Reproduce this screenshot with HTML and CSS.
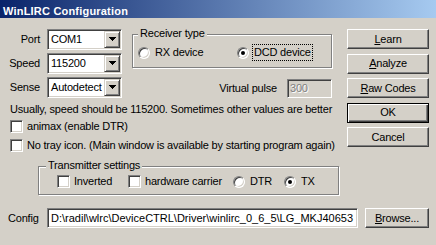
FILE: index.html
```html
<!DOCTYPE html>
<html>
<head>
<meta charset="utf-8">
<title>WinLIRC Configuration</title>
<link rel="stylesheet" href="styles.css">
</head>
<body>
<div class="titlebar"><span class="title">WinLIRC Configuration</span></div>
<div class="main">
  <div class="leftcol">
    <div class="toprow">
      <div class="fields">
        <span class="lbl">Port</span>
        <div class="combo"><span class="val">COM1</span><span class="drop"><svg width="7" height="4" viewBox="0 0 7 4" shape-rendering="crispEdges"><path d="M0 0h7v1H0zM1 1h5v1H1zM2 2h3v1H2zM3 3h1v1H3z" fill="#000"/></svg></span></div>
        <span class="lbl">Speed</span>
        <div class="combo"><span class="val">115200</span><span class="drop"><svg width="7" height="4" viewBox="0 0 7 4" shape-rendering="crispEdges"><path d="M0 0h7v1H0zM1 1h5v1H1zM2 2h3v1H2zM3 3h1v1H3z" fill="#000"/></svg></span></div>
        <span class="lbl">Sense</span>
        <div class="combo"><span class="val">Autodetect</span><span class="drop"><svg width="7" height="4" viewBox="0 0 7 4" shape-rendering="crispEdges"><path d="M0 0h7v1H0zM1 1h5v1H1zM2 2h3v1H2zM3 3h1v1H3z" fill="#000"/></svg></span></div>
      </div>
      <div class="midcol">
        <fieldset class="group rx">
          <legend>Receiver type</legend>
          <div class="rxopts">
            <div class="opt"><span class="radio"></span><span class="txt">RX device</span></div>
            <div class="opt"><span class="radio on"></span><span class="txt focus">DCD device</span></div>
          </div>
        </fieldset>
        <div class="vpulse"><span class="vlbl">Virtual pulse</span><div class="edit disabled">300</div></div>
      </div>
    </div>
    <p class="note">Usually, speed should be 115200. Sometimes other values are better</p>
    <div class="check c1"><span class="cb"></span><span class="txt">animax (enable DTR)</span></div>
    <div class="check c2"><span class="cb"></span><span class="txt">No tray icon. (Main window is available by starting program again)</span></div>
    <fieldset class="group tx">
      <legend>Transmitter settings</legend>
      <div class="txopts">
        <div class="opt"><span class="cb"></span><span class="txt">Inverted</span></div>
        <div class="opt"><span class="cb"></span><span class="txt">hardware carrier</span></div>
        <div class="opt"><span class="radio"></span><span class="txt">DTR</span></div>
        <div class="opt"><span class="radio on"></span><span class="txt">TX</span></div>
      </div>
    </fieldset>
  </div>
  <div class="buttons">
    <div class="btn"><span><u>L</u>earn</span></div>
    <div class="btn"><span><u>A</u>nalyze</span></div>
    <div class="btn"><span><u>R</u>aw Codes</span></div>
    <div class="btn default"><span>OK</span></div>
    <div class="btn"><span>Cancel</span></div>
  </div>
</div>
<div class="configrow">
  <span class="cfglbl">Config</span>
  <div class="edit path">D:\radil\wlrc\DeviceCTRL\Driver\winlirc_0_6_5\LG_MKJ40653</div>
  <div class="btn browse"><span><u>B</u>rowse...</span></div>
</div>
</body>
</html>
```

FILE: styles.css
```css
* { box-sizing: border-box; }
html, body { margin: 0; padding: 0; }
body {
  width: 436px;
  height: 245px;
  overflow: hidden;
  background: #d4d0c8;
  font-family: "Liberation Sans", Arial, sans-serif;
  font-size: 11px;
  line-height: 13px;
  letter-spacing: -0.2px;
  color: #000;
}

.titlebar {
  height: 18px;
  background: linear-gradient(to right, #0a246a, #a6caf0);
  display: flex;
  align-items: flex-end;
  padding-left: 3px;
}
.title {
  color: #fff;
  font-weight: bold;
  letter-spacing: 0.2px;
  line-height: 13px;
  white-space: nowrap;
}

.main { display: flex; padding-top: 9px; }
.leftcol { width: 340px; }
.toprow { display: flex; }

.fields {
  display: grid;
  grid-template-columns: 40px 75px;
  column-gap: 7px;
  row-gap: 3px;
  grid-auto-rows: 21px;
  align-items: center;
  margin-top: 2px;
}
.lbl { text-align: right; }

.combo {
  width: 75px;
  height: 21px;
  display: flex;
  padding: 1px;
  border: 1px solid;
  border-color: #808080 #fff #fff #808080;
  box-shadow: inset 1px 1px #404040, inset -1px -1px #d4d0c8;
  background: #fff;
}
.combo .val {
  flex: 1;
  padding-left: 2px;
  line-height: 17px;
  white-space: nowrap;
  overflow: hidden;
}
.drop {
  width: 16px;
  height: 17px;
  flex: none;
  display: flex;
  align-items: flex-start;
  padding: 5px 0 0 4px;
  background: #d4d0c8;
  border: 1px solid;
  border-color: #d4d0c8 #404040 #404040 #d4d0c8;
  box-shadow: inset 1px 1px #fff, inset -1px -1px #808080;
}
.drop svg { display: block; }

.midcol {
  margin-left: 10px;
  width: 200px;
  display: flex;
  flex-direction: column;
  align-items: flex-end;
}

fieldset.group {
  margin: 0;
  padding: 0;
  min-width: 0;
  border: 1px solid #808080;
  box-shadow: inset 1px 1px #fff, 1px 1px #fff;
}
fieldset.group legend {
  padding: 0 2px 2px;
  line-height: 13px;
  background: #d4d0c8;
  white-space: nowrap;
}
fieldset.group.rx { width: 200px; }
fieldset.group.rx legend { margin-left: 5px; }
.rxopts {
  display: grid;
  grid-template-columns: 99px auto;
  padding: 2px 0 6px 5px;
}
.opt { display: flex; align-items: center; height: 17px; }

.radio {
  width: 12px;
  height: 12px;
  flex: none;
  position: relative;
  border-radius: 50%;
  background: #fff;
  border: 1px solid;
  border-color: #808080 #fff #fff #808080;
  box-shadow: inset 1px 1px #404040, inset -1px -1px #d4d0c8;
  margin-right: 3px;
}
.radio.on::after {
  content: "";
  position: absolute;
  left: 3px;
  top: 3px;
  width: 4px;
  height: 4px;
  border-radius: 50%;
  background: #000;
}
.cb {
  width: 13px;
  height: 13px;
  flex: none;
  background: #fff;
  border: 1px solid;
  border-color: #808080 #fff #fff #808080;
  box-shadow: inset 1px 1px #404040, inset -1px -1px #d4d0c8;
  margin-right: 2px;
}
.txt {
  padding: 1px;
  border: 1px solid transparent;
  white-space: nowrap;
}
.txt.focus { border: 1px dotted #000; }

.vpulse {
  display: flex;
  align-items: center;
  gap: 10px;
  margin-top: 11px;
}
.edit {
  border: 1px solid;
  border-color: #808080 #fff #fff #808080;
  box-shadow: inset 1px 1px #404040, inset -1px -1px #d4d0c8;
  white-space: nowrap;
  overflow: hidden;
}
.edit.disabled {
  width: 45px;
  height: 19px;
  padding: 1px 0 0 2px;
  line-height: 15px;
  background: #d4d0c8;
  color: #808080;
  text-shadow: 1px 1px 0 #fff;
}

.note { margin: 5px 0 0 10px; white-space: nowrap; }
.check { display: flex; align-items: center; height: 13px; margin-left: 10px; }
.check.c1 { margin-top: 4px; }
.check.c2 { margin-top: 6px; }

fieldset.group.tx { margin: 7px 0 0 38px; width: 301px; }
fieldset.group.tx legend { margin-left: 7px; }
.txopts {
  display: grid;
  grid-template-columns: 71px 105px 51px auto;
  padding: 1px 0 6px 18px;
}
.txopts .opt { height: 13px; }

.buttons {
  margin-left: 7px;
  width: 82px;
  display: flex;
  flex-direction: column;
  gap: 4.5px;
  padding-top: 2px;
}
.btn {
  height: 20px;
  display: flex;
  align-items: center;
  justify-content: center;
  background: #d4d0c8;
  border: 1px solid;
  border-color: #fff #404040 #404040 #fff;
  box-shadow: inset -1px -1px #808080;
  white-space: nowrap;
}
.btn.default {
  border-color: #000;
  box-shadow: inset 1px 1px #fff, inset -1px -1px #404040, inset -2px -2px #808080;
}

.configrow {
  display: flex;
  align-items: center;
  height: 20px;
  margin-top: 13px;
}
.cfglbl { width: 47px; padding-left: 8px; }
.edit.path {
  width: 311px;
  height: 20px;
  padding: 1px 0 0 3px;
  line-height: 16px;
  background: #fff;
  letter-spacing: 0;
}
.btn.browse { margin-left: 7px; width: 64px; }
```
